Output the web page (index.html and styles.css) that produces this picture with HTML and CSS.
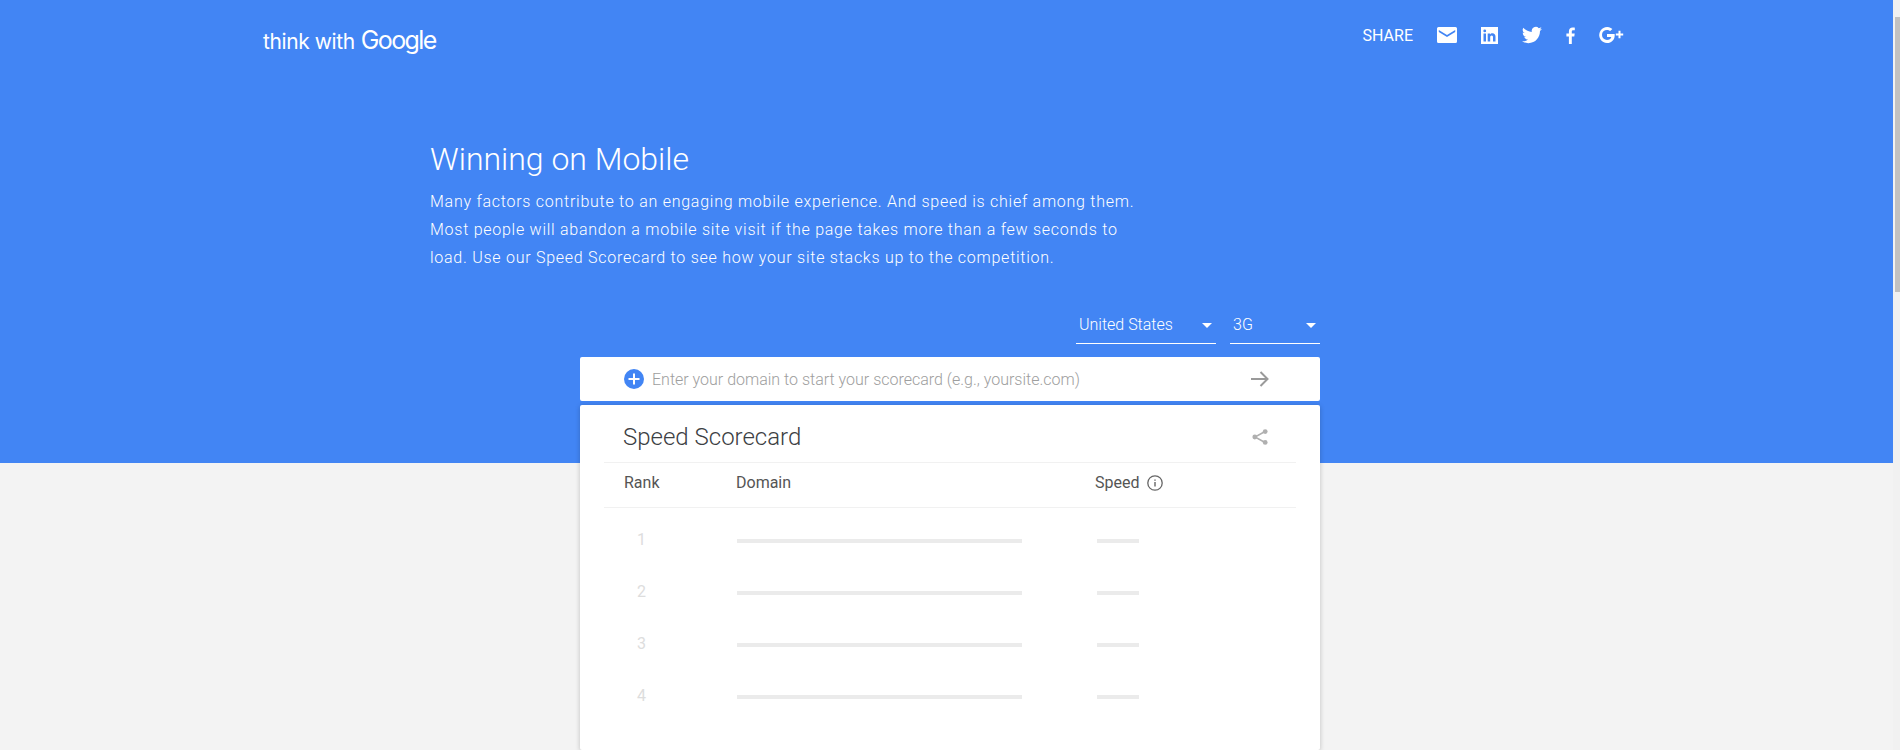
FILE: index.html
```html
<!DOCTYPE html>
<html lang="en">
<head>
    <meta charset="UTF-8">
    <meta name="viewport" content="width=device-width, initial-scale=1.0">
    <title>Winning on Mobile - Think with Google</title>
    <link rel="stylesheet" href="styles.css">
</head>
<body>
    <div class="page">
        <main class="content">
            <section class="hero">
                <header class="topbar">
                    <a class="logo" href="#"><span class="logo-think">think with</span> <span class="logo-google">Google</span></a>
                    <div class="share">
                        <span class="share-label">SHARE</span>
                        <svg class="icon-mail" viewBox="0 0 20 16"><path fill="#fff" d="M1.5 0h17A1.5 1.5 0 0 1 20 1.5v13a1.500 1.500 0 0 1-1.500 1.500h-17A1.500 1.500 0 0 1 0 14.500v-13A1.500 1.500 0 0 1 1.500 0zM1.800 3v2l8.200 5 8.200-5V3L10 8z" fill-rule="evenodd"/></svg>
                        <svg class="icon-linkedin" viewBox="0 0 17 17"><path fill="#fff" fill-rule="evenodd" d="M0 0h17v17H0zM2.500 6.500V14.500H5V6.500zM3.750 2.500a1.400 1.400 0 1 0 0 2.800 1.400 1.400 0 0 0 0-2.800zM6.700 6.500V14.500H9.200V10.300c0-1.200.5-1.900 1.500-1.900s1.300.7 1.300 1.900v4.200h2.500V9.800c0-2.300-1.200-3.500-3-3.500-1.200 0-2 .5-2.500 1.300V6.500z"/></svg>
                        <svg class="icon-twitter" viewBox="0 0 24 24"><path fill="#fff" d="M23.950 4.570a10 10 0 0 1-2.820.77 4.960 4.960 0 0 0 2.160-2.720c-.95.550-2 .96-3.130 1.190a4.920 4.920 0 0 0-8.390 4.480C7.690 8.100 4.070 6.130 1.640 3.160a4.920 4.920 0 0 0 1.520 6.570 4.900 4.900 0 0 1-2.230-.61v.06a4.920 4.920 0 0 0 3.950 4.830 5 5 0 0 1-2.210.08 4.940 4.940 0 0 0 4.600 3.420A9.870 9.870 0 0 1 0 19.540a14 14 0 0 0 7.560 2.210c9.050 0 14-7.500 14-13.980 0-.21 0-.42-.02-.63a9.940 9.940 0 0 0 2.410-2.570z"/></svg>
                        <svg class="icon-facebook" viewBox="0 0 9 17"><path fill="#fff" d="M5.800 17V9.500h2.500l.4-2.900H5.800V4.700c0-.85.250-1.400 1.450-1.400H8.800V.7C8.500.65 7.600.6 6.600.6 4.400.6 2.900 1.900 2.900 4.400v2.200H.4v2.900h2.500V17z"/></svg>
                        <svg class="icon-gplus" viewBox="0 0 26 16"><path fill="#fff" d="M8 7v2.900h4.300c-.4 1.900-2 3-4.300 3a5 5 0 0 1 0-10c1.300 0 2.400.45 3.200 1.200l2.200-2.200A8 8 0 1 0 8 16c4.600 0 7.700-3.200 7.700-7.800 0-.4 0-.8-.1-1.200z"/><path fill="#fff" d="M21.500 3.800h-2v2.700h-2.700v2h2.700v2.700h2V8.500h2.700v-2h-2.700z"/></svg>
                    </div>
                </header>

                <div class="intro">
                    <h1>Winning on Mobile</h1>
                    <p>Many factors contribute to an engaging mobile experience. And speed is chief among them. Most people will abandon a mobile site visit if the page takes more than a few seconds to load. Use our Speed Scorecard to see how your site stacks up to the competition.</p>
                </div>

                <div class="filters">
                    <div class="select select-country"><span>United States</span><i class="caret"></i></div>
                    <div class="select select-network"><span>3G</span><i class="caret"></i></div>
                </div>

                <div class="search">
                    <svg class="icon-plus" viewBox="0 0 20 20"><circle cx="10" cy="10" r="10" fill="#4285f4"/><path fill="#fff" d="M9 4.500h2V9h4.500v2H11v4.500H9V11H4.500V9H9z"/></svg>
                    <span class="placeholder">Enter your domain to start your scorecard (e.g., yoursite.com)</span>
                    <svg class="icon-arrow" viewBox="0 0 18 16"><path fill="none" stroke="#9a9a9a" stroke-width="2" d="M0 8h16M9.500 1l7 7-7 7"/></svg>
                </div>
            </section>

            <section class="scorecard">
                <div class="card-head">
                    <h2>Speed Scorecard</h2>
                    <svg class="icon-share" viewBox="0 0 16 16"><path stroke="#b0b0b0" stroke-width="1.500" fill="none" d="M13 2.500 3 8l10 5.500"/><circle cx="13.200" cy="2.600" r="2.400" fill="#b0b0b0"/><circle cx="2.800" cy="8" r="2.400" fill="#b0b0b0"/><circle cx="13.200" cy="13.400" r="2.400" fill="#b0b0b0"/></svg>
                </div>
                <div class="table-head">
                    <span class="col-rank">Rank</span>
                    <span class="col-domain">Domain</span>
                    <span class="col-speed">Speed
                        <svg class="icon-info" viewBox="0 0 16 16"><circle cx="8" cy="8" r="7.200" fill="none" stroke="#666" stroke-width="1.300"/><path fill="#666" d="M7.300 7h1.400v4.600H7.300zM7.300 4.400h1.400v1.400H7.300z"/></svg>
                    </span>
                </div>
                <div class="rows">
                    <div class="row"><span class="num">1</span><i class="bar bar-long"></i><i class="bar bar-short"></i></div>
                    <div class="row"><span class="num">2</span><i class="bar bar-long"></i><i class="bar bar-short"></i></div>
                    <div class="row"><span class="num">3</span><i class="bar bar-long"></i><i class="bar bar-short"></i></div>
                    <div class="row"><span class="num">4</span><i class="bar bar-long"></i><i class="bar bar-short"></i></div>
                </div>
            </section>
        </main>
        <div class="scrollbar"><div class="thumb"></div></div>
    </div>
</body>
</html>
```

FILE: styles.css
```css
* {
    margin: 0;
    padding: 0;
    box-sizing: border-box;
    font-family: 'Roboto', sans-serif;
}

html, body {
    height: 750px;
    overflow: hidden;
}

body {
    background-color: #f3f3f3;
}

.page {
    display: flex;
    height: 750px;
}

.content {
    flex: 1;
    min-width: 0;
}

.scrollbar {
    width: 7px;
    padding: 17px 0 0 2px;
    background: #f1f1f1;
}

.thumb {
    height: 275px;
    background: #c1c1c1;
}

/* blue band */
.hero {
    height: 463px;
    background: #4285f4;
    color: #fff;
    overflow: hidden;
}

.topbar {
    display: flex;
    justify-content: space-between;
    align-items: center;
    height: 70px;
    margin: 0 268px 0 263px;
}

.logo {
    color: #fff;
    text-decoration: none;
    white-space: nowrap;
    display: flex;
    align-items: baseline;
    gap: 6px;
    padding-top: 10px;
}

.logo-think {
    font-family: 'Inter', sans-serif;
    font-size: 21px;
    font-weight: 400;
    letter-spacing: -0.4px;
}

.logo-google {
    font-family: 'Inter', sans-serif;
    font-size: 25px;
    font-weight: 400;
    letter-spacing: -1.6px;
}

.share {
    display: flex;
    align-items: center;
}

.share-label {
    font-size: 16px;
    font-weight: 400;
    margin-right: 24px;
}

.icon-mail { width: 20px; height: 16px; margin-right: 24px; }
.icon-linkedin { width: 17px; height: 17px; margin-right: 24px; }
.icon-twitter { width: 20px; height: 20px; margin-right: 24px; }
.icon-facebook { width: 9px; height: 17px; margin-right: 24px; }
.icon-gplus { width: 26px; height: 16px; }

.intro {
    width: 712px;
    margin: 69px 0 0 430px;
}

.intro h1 {
    font-size: 32px;
    font-weight: 300;
    line-height: 40px;
}

.intro p {
    font-size: 16px;
    font-weight: 300;
    line-height: 28px;
    letter-spacing: 0.74px;
    margin-top: 9px;
}

.filters {
    display: flex;
    justify-content: flex-end;
    gap: 14px;
    width: 740px;
    margin: 35px 0 0 580px;
}

.select {
    display: flex;
    justify-content: space-between;
    align-items: center;
    height: 37px;
    padding: 0 4px 1px 3px;
    border-bottom: 1px solid #fff;
    font-size: 16px;
    font-weight: 300;
}

.select-country { width: 140px; }
.select-network { width: 90px; }

.caret {
    width: 0;
    height: 0;
    border-left: 5px solid transparent;
    border-right: 5px solid transparent;
    border-top: 5px solid #fff;
    margin-top: 2px;
}

.search {
    display: flex;
    align-items: center;
    width: 740px;
    height: 44px;
    margin: 13px 0 0 580px;
    padding-left: 44px;
    background: #fff;
    border-radius: 2px;
}

.icon-plus {
    width: 20px;
    height: 20px;
    margin-right: 8px;
}

.placeholder {
    flex: 1;
    color: #9e9e9e;
    font-size: 16px;
    font-weight: 300;
}

.icon-arrow {
    width: 18px;
    height: 16px;
    margin-right: 51px;
}

/* card over the band */
.scorecard {
    position: relative;
    width: 740px;
    height: 345px;
    margin: -58px 0 0 580px;
    padding: 0 24px;
    background: #fff;
    border-radius: 2px;
    box-shadow: 0 1px 5px rgba(0, 0, 0, 0.22);
}

.card-head {
    display: flex;
    justify-content: space-between;
    align-items: center;
    height: 58px;
    padding: 7px 28px 0 19px;
    border-bottom: 1px solid #f1f1f1;
}

.card-head h2 {
    font-size: 24px;
    font-weight: 300;
    color: #3c4043;
}

.icon-share {
    width: 16px;
    height: 16px;
}

.table-head {
    display: flex;
    align-items: center;
    height: 45px;
    padding-bottom: 5px;
    border-bottom: 1px solid #f1f1f1;
    font-size: 16px;
    color: #555;
}

.col-rank {
    width: 132px;
    padding-left: 20px;
}

.col-domain {
    width: 359px;
}

.col-speed {
    display: flex;
    align-items: center;
    gap: 8px;
}

.icon-info {
    width: 16px;
    height: 16px;
}

.rows {
    padding-top: 5px;
}

.row {
    display: flex;
    align-items: center;
    height: 52px;
}

.num {
    width: 133px;
    padding-left: 33px;
    font-size: 16px;
    color: #ddd;
}

.bar {
    display: block;
    height: 4px;
    background: #ebebeb;
    margin-top: 4px;
}

.bar-long {
    width: 285px;
    margin-right: 75px;
}

.bar-short {
    width: 42px;
}
```
